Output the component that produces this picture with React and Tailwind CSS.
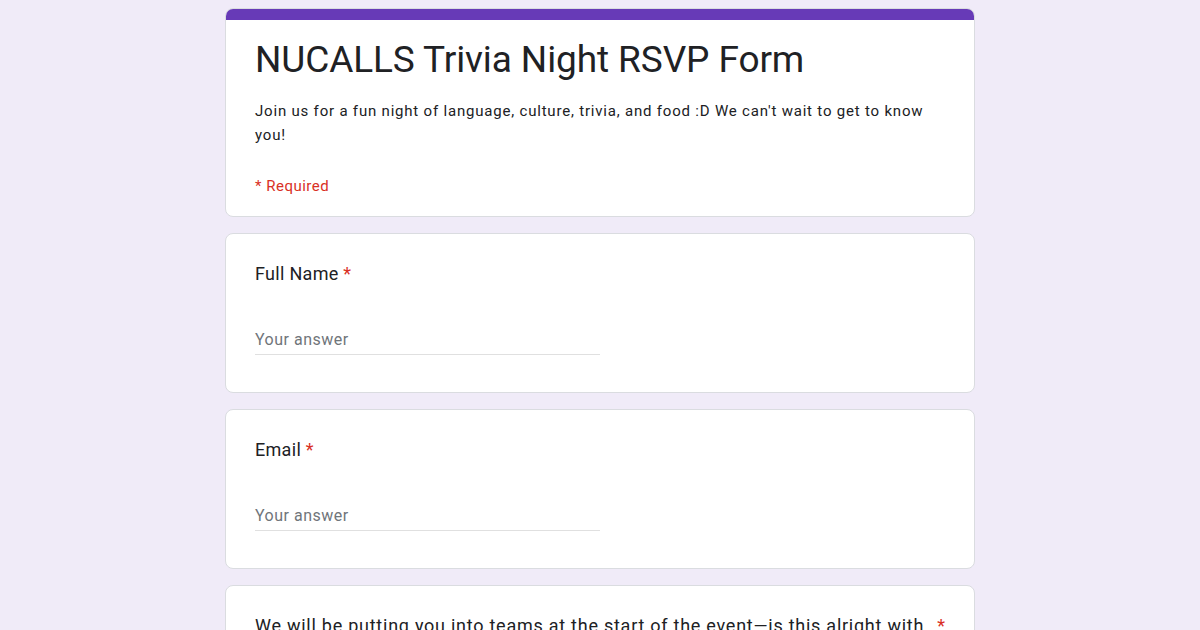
export default function App() {
  return (
    <div className="min-h-[630px] bg-[#f0ebf8] pt-2 font-['Roboto',sans-serif] text-[#202124]">
      <div className="mx-auto flex w-[750px] flex-col gap-4">
        {/* Header card */}
        <div className="overflow-hidden rounded-lg border border-[#dadce0] bg-white">
          <div className="h-[11px] bg-[#673ab7]" />
          <div className="px-[29px] pb-[18px] pt-[16px]">
            <h1 className="text-[37px] leading-[48px] tracking-[-0.1px]">NUCALLS Trivia Night RSVP Form</h1>
            <p className="mt-[15px] text-[15px] leading-[24px] tracking-[0.8px]">
              Join us for a fun night of language, culture, trivia, and food :D We can't wait to get to know you!
            </p>
            <p className="mt-[27px] text-[15px] leading-[24px] tracking-[0.5px] text-[#d93025]">* Required</p>
          </div>
        </div>

        <Question label="Full Name" />
        <Question label="Email" />

        <div className="rounded-lg border border-[#dadce0] bg-white px-[29px] pb-6 pt-[28px]">
          <div className="flex gap-2">
            <span className="flex-1 text-[18px] leading-[24px] tracking-[0.75px]">
              We will be putting you into teams at the start of the event—is this alright with you?
            </span>
            <span className="text-[18px] leading-[24px] text-[#d93025]">*</span>
          </div>
        </div>
      </div>
    </div>
  )
}

function Question({ label }) {
  return (
    <div className="rounded-lg border border-[#dadce0] bg-white px-[29px] pb-[37px] pt-[28px]">
      <div className="text-[18px] leading-[24px] tracking-[0.3px]">
        {label} <span className="text-[#d93025]">*</span>
      </div>
      <div className="mt-[43px] w-[345px] border-b border-[#e0e0e0] pb-[3px] text-[16px] leading-[22px] tracking-[0.5px] text-[#70757a]">
        Your answer
      </div>
    </div>
  )
}
